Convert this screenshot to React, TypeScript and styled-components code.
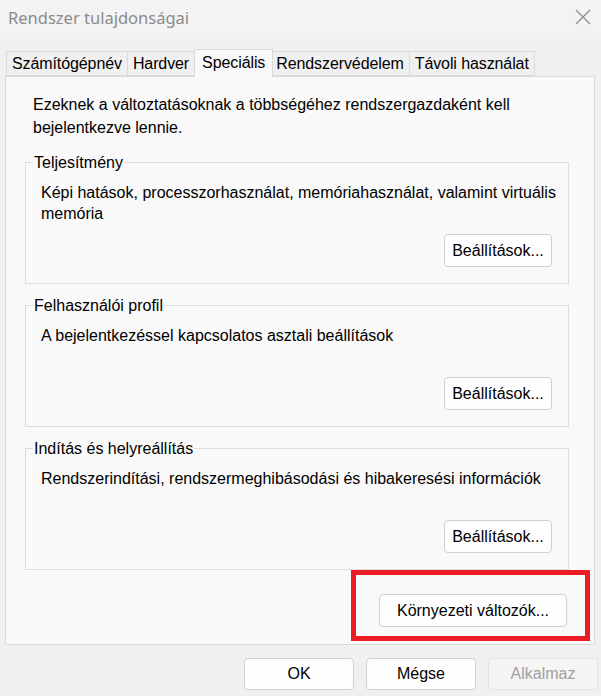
import React from 'react'
import styled, { createGlobalStyle } from 'styled-components'

const GlobalStyle = createGlobalStyle`
    body {
        margin: 0;
        background: #f0f0f0;
    }
`

const Window = styled.div`
    width: 601px;
    height: 696px;
    background: #f0f0f0;
    display: flex;
    flex-direction: column;
    font-family: 'Liberation Sans', Arial, sans-serif;
    font-size: 16px;
    color: #000;
    box-sizing: border-box;
    overflow: hidden;
`

const TitleBar = styled.div`
    height: 39px;
    flex-shrink: 0;
    background: #f3f3f3;
    display: flex;
    align-items: center;
    justify-content: space-between;
    padding: 0 10px 0 8px;

    .title {
        font-family: 'Noto Sans', 'Open Sans', sans-serif;
        font-size: 16.5px;
        color: #8b8b8b;
        margin-top: -4px;
    }
`

const CloseIcon = () => (
    <svg width="16" height="16" viewBox="0 0 16 16" style={{ marginTop: -6 }}>
        <path d="M1 1 L15 15 M15 1 L1 15" stroke="#8a8a8a" strokeWidth="1.2" fill="none" />
    </svg>
)

const TabRow = styled.div`
    display: flex;
    align-items: flex-end;
    height: 25px;
    margin-top: 12px;
    padding-left: 7px;
    position: relative;
    z-index: 1;
`

const Tab = styled.div<{ $active?: boolean }>`
    height: ${({ $active }) => ($active ? '28px' : '25px')};
    box-sizing: border-box;
    display: flex;
    align-items: center;
    padding: ${({ $active }) => ($active ? '0 7px 2px' : '0 5px')};
    margin: ${({ $active }) => ($active ? '0 -2px -1px' : '0')};
    border: 1px solid #dadada;
    border-bottom: ${({ $active }) => ($active ? 'none' : '1px solid #dadada')};
    margin-left: -1px;
    background: ${({ $active }) => ($active ? '#f9f9f9' : '#f0f0f0')};
    position: relative;
    z-index: ${({ $active }) => ($active ? 2 : 1)};
    white-space: nowrap;
    letter-spacing: -0.1px;
`

const Panel = styled.div`
    margin: 0 6px 0 5px;
    height: 569px;
    box-sizing: border-box;
    border: 1px solid #dadada;
    background: #f9f9f9;
    display: flex;
    flex-direction: column;
    padding: 16px 4px 3px 19px;
`

const Intro = styled.p`
    margin: 0 0 23px 8px;
    line-height: 23px;
    padding-right: 20px;
`

const Groups = styled.div`
    display: flex;
    flex-direction: column;
    gap: 21px;
    margin-right: 21px;
`

const Group = styled.div`
    position: relative;
    height: 122px;
    box-sizing: border-box;
    border: 1px solid #dcdcdc;
    display: flex;
    flex-direction: column;
    padding: 19px 16px 16px 15px;
`

const Legend = styled.span`
    position: absolute;
    top: -12px;
    left: 7px;
    padding: 0 1px;
    background: #f9f9f9;
    line-height: 23px;
`

const GroupText = styled.p`
    margin: 0 -14px 0 0;
    line-height: 21px;
`

const Button = styled.button<{ $disabled?: boolean; $width?: number }>`
    width: ${({ $width }) => $width ?? 110}px;
    height: 33px;
    box-sizing: border-box;
    border: 1px solid ${({ $disabled }) => ($disabled ? '#e3e3e3' : '#d0d0d0')};
    border-radius: 4px;
    background: ${({ $disabled }) => ($disabled ? '#f5f5f5' : '#fefefe')};
    color: ${({ $disabled }) => ($disabled ? '#a0a0a0' : '#000')};
    font-family: 'Liberation Sans', Arial, sans-serif;
    font-size: 16px;
    padding: 0;
    cursor: default;
`

const GroupButton = styled(Button)`
    margin-top: auto;
    align-self: flex-end;
`

const Highlight = styled.div`
    align-self: flex-end;
    width: 239px;
    height: 76px;
    box-sizing: border-box;
    margin-top: auto;
    border: 5px solid #ec1c24;
    display: flex;
    justify-content: flex-end;
    align-items: flex-start;
    padding: 19px 18px 0 0;
    position: relative;
    z-index: 1;
`

const Footer = styled.div`
    display: flex;
    justify-content: flex-end;
    gap: 12px;
    padding: 13px 3px 0 0;
`

const FooterButton = styled(Button)`
    height: 32px;
`

const groups = [
    {
        title: 'Teljesítmény',
        text: 'Képi hatások, processzorhasználat, memóriahasználat, valamint virtuális memória',
    },
    {
        title: 'Felhasználói profil',
        text: 'A bejelentkezéssel kapcsolatos asztali beállítások',
    },
    {
        title: 'Indítás és helyreállítás',
        text: 'Rendszerindítási, rendszermeghibásodási és hibakeresési információk',
    },
]

const tabs = ['Számítógépnév', 'Hardver', 'Speciális', 'Rendszervédelem', 'Távoli használat']

const App = () => {
    return (
        <>
            <GlobalStyle />
            <Window>
                <TitleBar>
                    <span className="title">Rendszer tulajdonságai</span>
                    <CloseIcon />
                </TitleBar>
                <TabRow>
                    {tabs.map((t) => (
                        <Tab key={t} $active={t === 'Speciális'}>
                            {t}
                        </Tab>
                    ))}
                </TabRow>
                <Panel>
                    <Intro>
                        Ezeknek a változtatásoknak a többségéhez rendszergazdaként kell bejelentkezve lennie.
                    </Intro>
                    <Groups>
                        {groups.map((g) => (
                            <Group key={g.title}>
                                <Legend>{g.title}</Legend>
                                <GroupText>{g.text}</GroupText>
                                <GroupButton $width={108}>Beállítások...</GroupButton>
                            </Group>
                        ))}
                    </Groups>
                    <Highlight>
                        <Button $width={188}>Környezeti változók...</Button>
                    </Highlight>
                </Panel>
                <Footer>
                    <FooterButton>OK</FooterButton>
                    <FooterButton>Mégse</FooterButton>
                    <FooterButton $disabled>Alkalmaz</FooterButton>
                </Footer>
            </Window>
        </>
    )
}

export default App
